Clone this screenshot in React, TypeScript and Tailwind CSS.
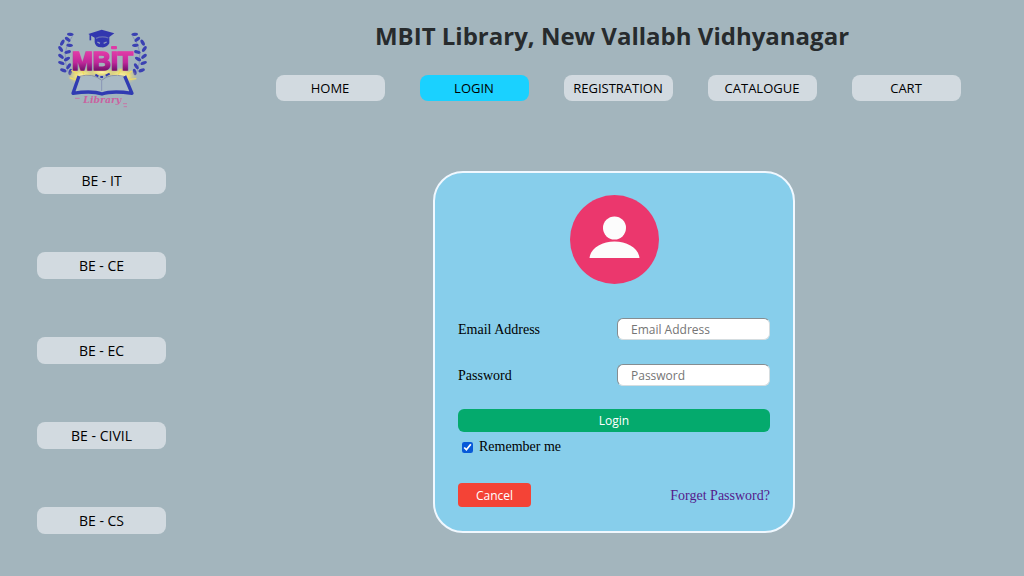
const navItems = ['HOME', 'LOGIN', 'REGISTRATION', 'CATALOGUE', 'CART'];
const branches = ['BE - IT', 'BE - CE', 'BE - EC', 'BE - CIVIL', 'BE - CS'];

const leaves: [number, number, number][] = [
  [70, 43, 5], [62, 58, 40], [46, 68, -60], [68, 76, 5], [41, 87, 55],
  [62, 96, -15], [42, 109, 40], [60, 117, -30], [43, 129, 20], [65, 139, -55],
  [49, 151, 20], [70, 156, -80],
];

function Laurel() {
  return (
    <g fill="#3b41b2">
      <path d="M76 49 Q38 94 66 163" fill="none" stroke="#7780b8" strokeWidth="2" />
      {leaves.map(([x, y, r]) => (
        <ellipse key={`${x}-${y}`} cx={x} cy={y} rx="10" ry="5" transform={`rotate(${r} ${x} ${y})`} />
      ))}
    </g>
  );
}

function Logo() {
  return (
    <svg viewBox="0 0 330 285" className="h-[95px] w-[110px]" role="img" aria-label="MBIT Library">
      <defs>
        <linearGradient id="word" x1="0" y1="0" x2="0" y2="1">
          <stop offset="0.2" stopColor="#df3aa6" />
          <stop offset="0.55" stopColor="#c0289a" />
          <stop offset="0.8" stopColor="#7c1470" />
        </linearGradient>
        <radialGradient id="glow">
          <stop offset="0" stopColor="#fff3a8" />
          <stop offset="0.5" stopColor="#eedf78" stopOpacity="0.9" />
          <stop offset="1" stopColor="#dccd80" stopOpacity="0" />
        </radialGradient>
      </defs>
      <Laurel />
      <g transform="translate(333 0) scale(-1 1)">
        <Laurel />
      </g>
      <ellipse cx="105" cy="168" rx="44" ry="27" fill="url(#glow)" />
      <ellipse cx="223" cy="168" rx="48" ry="27" fill="url(#glow)" />
      <ellipse cx="165" cy="157" rx="45" ry="13" fill="url(#glow)" />
      <path d="M68 173 l18 7 M73 151 l18 9 M255 153 l-15 10 M268 176 l-20 2 M104 149 l7 14 M222 147 l-8 16" stroke="#f0dc62" strokeWidth="4" />
      <path d="M97 171 Q137 160 163 180 Q192 160 231 171 L250 216 Q193 208 165 220 Q135 208 82 216Z" fill="#a9bac5" />
      <path d="M96 168 L78 220 Q135 211 165 222 Q195 211 255 220 L233 168" fill="none" stroke="#303bb2" strokeWidth="10" strokeLinejoin="round" />
      <path d="M98 169 Q137 158 164 181 Q189 159 231 169" fill="none" stroke="#8b93a8" strokeWidth="3" />
      <path d="M164 181 V213" stroke="#8996b6" strokeWidth="3" />
      <path d="M145 164 l9 5 M160 171 h8 M176 167 l12 -6" stroke="#333aae" strokeWidth="6" />
      <path d="M124 42 L164 29 L202 40 L187 51 V70 Q179 84 164 82 Q145 83 143 67 V53Z" fill="#3237af" />
      <path d="M130 43 V61" stroke="#3237af" strokeWidth="5" />
      <path d="M147 55 Q166 47 184 54" fill="none" stroke="#6870b6" strokeWidth="4" />
      <path d="M151 66 l8 4 M170 70 l9 -4" stroke="#919ec0" strokeWidth="4" />
      <text x="75" y="150" fontFamily="Liberation Sans, sans-serif" fontSize="75" fontWeight="700" fill="url(#word)" stroke="url(#word)" strokeWidth="5">MBIT</text>
      <rect x="192" y="78" width="18" height="10" rx="3" fill="#df3aa6" />
      <text x="166" y="250" textAnchor="middle" fontFamily="DejaVu Serif, serif" fontSize="28" fontStyle="italic" fontWeight="700" fill="#ca63a1">Library</text>
      <path d="M84 235 h14 M228 251 h12 M230 260 h10" stroke="#c578a8" strokeWidth="3" />
    </svg>
  );
}

function Avatar() {
  return (
    <svg viewBox="0 0 89 89" className="h-[89px] w-[89px]" role="img" aria-label="User">
      <circle cx="44.5" cy="44.5" r="44.5" fill="#eb376d" />
      <circle cx="44.5" cy="33" r="11.5" fill="#fcfcfc" />
      <path d="M19.5 63 C20.5 53 32 46.5 44.5 46.5 S68.5 53 69.5 63Z" fill="#fcfcfc" />
    </svg>
  );
}

const field =
  "h-[22px] w-[153px] rounded-md border border-t-[#858d91] border-l-[#858d91] border-r-[#d5dde0] border-b-[#d5dde0] bg-white px-[13px] font-['Open_Sans',sans-serif] text-xs text-black placeholder:text-[#757575]";

export default function App() {
  return (
    <div className="flex min-h-screen bg-[#a3b5bd] font-['Open_Sans',sans-serif] text-black">
      <aside className="flex w-[203px] shrink-0 flex-col items-center pt-5">
        <Logo />
        <nav aria-label="Branches" className="mt-[52px] flex w-[129px] flex-col gap-[58px]">
          {branches.map((branch) => (
            <button key={branch} type="button" className="h-[27px] rounded-lg bg-[#d2dae0] pt-px text-sm">
              {branch}
            </button>
          ))}
        </nav>
      </aside>
      <main className="flex grow flex-col items-center pt-4 pl-px">
        <h1 className="pr-1 text-2xl leading-10 font-bold text-[#272b2d]">MBIT Library, New Vallabh Vidhyanagar</h1>
        <nav aria-label="Main" className="mt-[19px] flex gap-[35px] pl-2">
          {navItems.map((item) => (
            <button
              key={item}
              type="button"
              aria-current={item === 'LOGIN' ? 'page' : undefined}
              className={
                item === 'LOGIN'
                  ? 'h-[26px] w-[109px] rounded-lg bg-[#1ad1ff] pt-0.5 text-[13px]'
                  : 'h-[26px] w-[109px] rounded-lg bg-[#d2dae0] pt-0.5 text-[13px]'
              }
            >
              {item}
            </button>
          ))}
        </nav>
        <form
          onSubmit={(event) => event.preventDefault()}
          className="mt-[70px] mb-[43px] flex w-[362px] flex-col rounded-[30px] border-2 border-[#f0f8ff] bg-[#87ceeb] px-[23px] pt-[22px] pb-6 font-['Liberation_Serif',serif] text-sm"
        >
          <div className="flex justify-center">
            <Avatar />
          </div>
          <div className="mt-[34px] flex items-center justify-between">
            <label htmlFor="email" className="pt-0.5">Email Address</label>
            <input id="email" type="email" placeholder="Email Address" className={field} />
          </div>
          <div className="mt-6 flex items-center justify-between">
            <label htmlFor="password" className="pt-0.5">Password</label>
            <input id="password" type="password" placeholder="Password" className={field} />
          </div>
          <button type="submit" className="mt-[23px] h-[23px] rounded-md bg-[#04aa6d] pt-px font-['Open_Sans',sans-serif] text-xs text-white">
            Login
          </button>
          <label className="mt-[5px] ml-1 flex items-center gap-1.5">
            <input type="checkbox" defaultChecked className="h-[11px] w-[11px] accent-[#075ad8]" />
            Remember me
          </label>
          <div className="mt-[26px] flex items-center justify-between">
            <button type="button" className="h-6 w-[73px] rounded bg-[#f44336] pt-px font-['Open_Sans',sans-serif] text-xs text-white">
              Cancel
            </button>
            <a href="#forgot" className="pt-0.5 text-[#551a8b]">Forget Password?</a>
          </div>
        </form>
      </main>
    </div>
  );
}
